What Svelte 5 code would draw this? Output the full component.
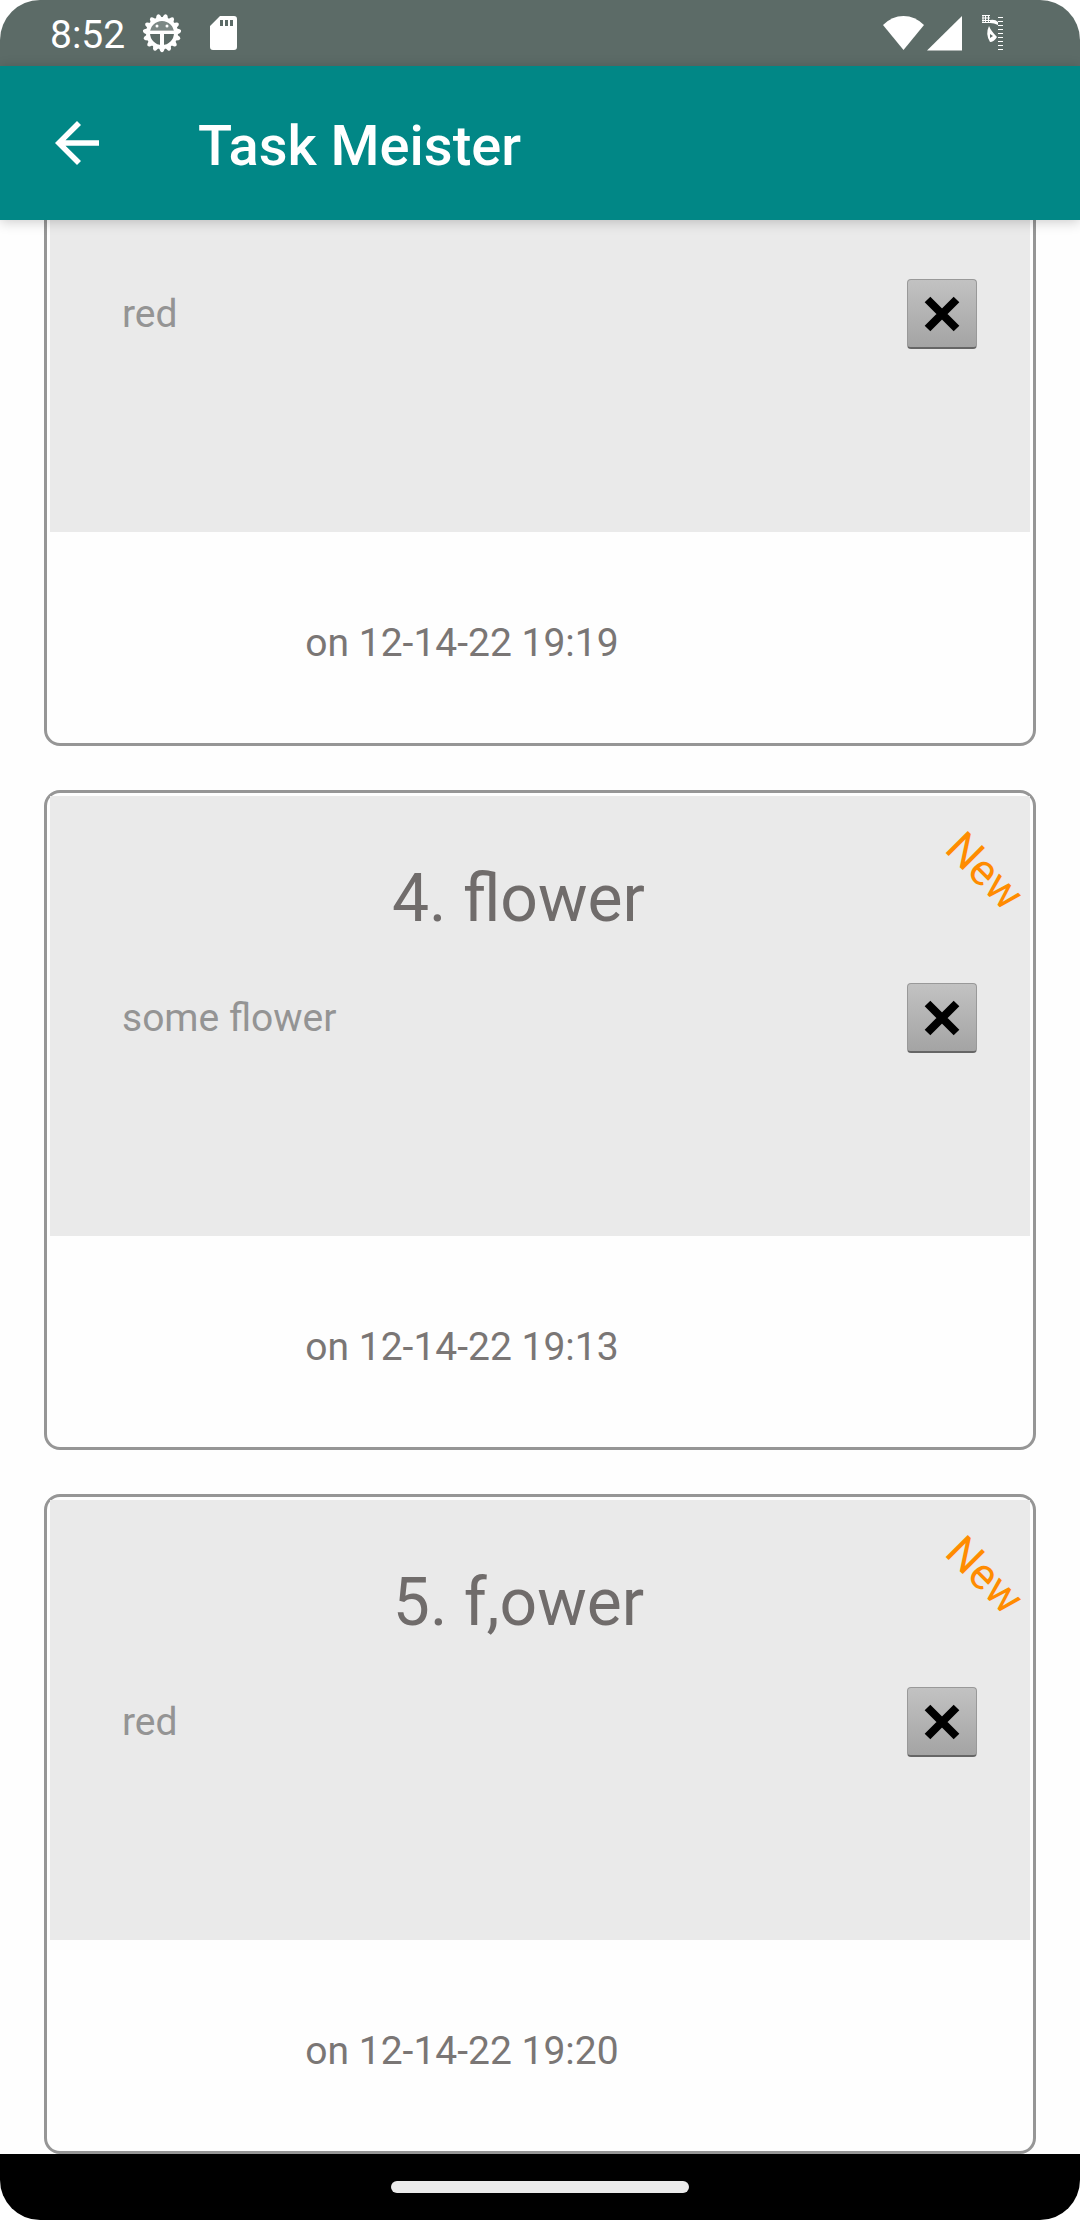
<script>
  const tasks = [
    { title: '', note: 'red', date: 'on 12-14-22 19:19', isNew: false },
    { title: '4. flower', note: 'some flower', date: 'on 12-14-22 19:13', isNew: true },
    { title: '5. f,ower', note: 'red', date: 'on 12-14-22 19:20', isNew: true }
  ];
  const teeth = Array.from({ length: 15 }, (_, i) => 12 + i * 24);
  const ticks = Array.from({ length: 9 }, (_, i) => i * 4);
</script>

<div class="screen">
  <div class="status">
    <span class="time">8:52</span>
    <svg class="gear" width="40" height="40" viewBox="-20 -20 40 40" aria-hidden="true">
      <circle r="14" fill="none" stroke="#fff" stroke-width="4" />
      {#each teeth as a}
        <path d="M-3 -15L-1.800 -18Q0 -20.500 1.800 -18L3 -15Z" fill="#fff" transform="rotate({a})" />
      {/each}
      <path d="M-13 -2.5H13V1H2V14H-2V1H-13Z" fill="#fff" />
      <path d="M-13 -3A13 13 0 0 1 13 -3Z" fill="#fff" opacity=".2" />
      <circle cx="-5" cy="-7" r="1.5" fill="#fff" />
      <circle cx="5" cy="-7" r="1.5" fill="#fff" />
    </svg>
    <svg class="sd" width="28" height="36" viewBox="0 0 28 36" aria-hidden="true">
      <path fill="#fff" fill-rule="evenodd" d="M10 1H24Q27 1 27 4V32Q27 35 24 35H3Q0 35 0 32V11ZM10 5V11H13V5ZM15 5V11H18V5ZM20 5V11H23V5Z" />
    </svg>
    <span class="spacer"></span>
    <svg width="42" height="36" viewBox="0 0 42 36" aria-hidden="true">
      <path fill="#fff" d="M0 10Q9 1 20.500 1T41 10L20.500 35Z" />
    </svg>
    <svg class="signal" width="36" height="36" viewBox="0 0 36 36" aria-hidden="true">
      <path fill="#fff" d="M0 35.500L35 1V35.500Z" />
    </svg>
    <svg class="battery" width="22" height="38" viewBox="0 0 22 38" aria-hidden="true">
      <path d="M0 1.500H8M0 4H8M0 6.500H8M0 8.500H8M1 1V9M3.500 1V9M6.500 1V9" stroke="#fff" stroke-width="1" />
      <path fill="#fff" fill-rule="evenodd" d="M8 6Q13 5 16 8V11Q12 9 8 9ZM7 12Q9 17 15 23Q12 28 8 28Q3 20 7 12ZM8 20V24L11 22Z" />
      {#each ticks as y}
        <path d="M16 {y + 3.5}H21" stroke="#fff" stroke-width="1" />
      {/each}
    </svg>
  </div>

  <header class="appbar">
    <button class="back" aria-label="Back">
      <svg width="44" height="44" viewBox="0 0 44 44" aria-hidden="true">
        <path fill="#fff" d="M44 19.250V24.750H10.500L26 40.100L22 44L0 22L22 0L26 3.900L10.500 19.250Z" />
      </svg>
    </button>
    <h1>Task Meister</h1>
  </header>

  <main class="list">
    {#each tasks as task}
      <article class="card">
        <div class="body">
          <h2>{task.title}</h2>
          {#if task.isNew}
            <span class="badge">New</span>
          {/if}
          <div class="row">
            <p class="note">{task.note}</p>
            <button class="delete" aria-label="Delete">
              <svg width="36" height="36" viewBox="0 0 36 36" aria-hidden="true">
                <path d="M3.500 3.500L32.500 32.500M32.500 3.500L3.500 32.500" stroke="#000" stroke-width="8" />
              </svg>
            </button>
          </div>
        </div>
        <p class="date">{task.date}</p>
      </article>
    {/each}
  </main>

  <nav class="navbar"><span class="handle"></span></nav>
</div>

<style>
  :global(body) {
    background: #fff;
  }
  .screen {
    display: flex;
    flex-direction: column;
    height: 100vh;
    background: #fefefe;
    border-radius: 40px;
    overflow: hidden;
    font-family: Roboto, sans-serif;
  }
  .status {
    flex: none;
    display: flex;
    align-items: center;
    height: 66px;
    padding: 0 76px 0 50px;
    background: #5c6b67;
    color: #fff;
  }
  .time {
    font-size: 39px;
    line-height: 46px;
    padding-top: 4px;
  }
  .gear {
    margin-left: 17px;
  }
  .sd {
    margin-left: 28px;
  }
  .spacer {
    flex: 1;
  }
  .signal {
    margin-left: 2px;
  }
  .battery {
    margin-left: 19px;
  }
  .appbar {
    flex: none;
    display: flex;
    align-items: center;
    height: 154px;
    padding: 0 44px;
    background: #018786;
    color: #fff;
    box-shadow: 0 2px 12px rgba(0, 0, 0, 0.2);
    z-index: 1;
  }
  .back {
    display: flex;
    padding: 0 11px;
    border: 0;
    background: none;
  }
  h1 {
    margin: 0 0 0 88px;
    padding-top: 6px;
    font-size: 56px;
    line-height: 64px;
    font-weight: 500;
  }
  .list {
    flex: 1;
    min-height: 0;
    display: flex;
    flex-direction: column;
    justify-content: flex-end;
    gap: 44px;
    padding: 0 44px;
    overflow: hidden;
  }
  .card {
    flex: none;
    padding: 3px;
    border: 3px solid #969696;
    border-radius: 16px;
    background: #fefefe;
  }
  .body {
    position: relative;
    box-sizing: border-box;
    min-height: 440px;
    padding: 64px 53px 0 72px;
    background: #eaeaea;
  }
  h2 {
    margin: 0;
    min-height: 78px;
    padding-right: 62px;
    font-size: 66px;
    line-height: 78px;
    font-weight: 400;
    text-align: center;
    color: #706c6b;
  }
  .badge {
    position: absolute;
    top: 49px;
    right: 1px;
    font-size: 44px;
    line-height: 52px;
    color: #ff8c00;
    transform: rotate(45deg);
  }
  .row {
    display: flex;
    align-items: center;
    justify-content: space-between;
    margin-top: 45px;
  }
  .note {
    margin: 0;
    font-size: 39px;
    line-height: 46px;
    color: #949494;
  }
  .delete {
    display: flex;
    align-items: center;
    justify-content: center;
    width: 70px;
    height: 70px;
    padding: 0;
    border: 1px solid #999;
    border-bottom: 2px solid #666;
    border-radius: 4px;
    background: linear-gradient(#c2c2c2, #a4a4a4);
  }
  .date {
    margin: 0;
    padding: 88px 156px 74px 0;
    font-size: 39px;
    line-height: 46px;
    text-align: center;
    color: #7a7675;
  }
  .navbar {
    flex: none;
    display: flex;
    align-items: center;
    justify-content: center;
    height: 66px;
    background: #000;
  }
  .handle {
    width: 298px;
    height: 12px;
    border-radius: 6px;
    background: #eaeaea;
  }
</style>
